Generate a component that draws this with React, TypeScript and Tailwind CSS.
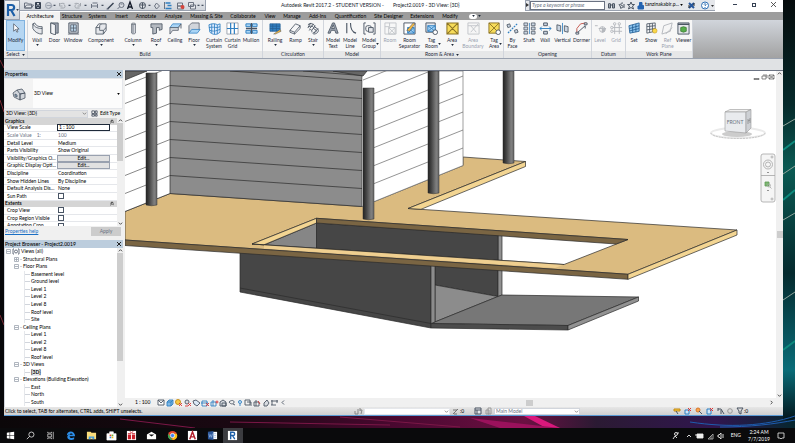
import React, { useState } from 'react';

const INK = '#4b5563';
const BLUE = '#2f7fc1';
const SKY = '#a9d4f5';

// 14x14 drawings used in the ribbon
const ICONS: Record<string, React.ReactNode> = {
  cursor: <path d="M5 2v8l2-2 1.500 3 1.200-.6L8.300 7.600h2.600z" fill="#fff" stroke={INK} strokeWidth=".8" />,
  wall: <path d="M2 2l2-1c2 4 5 4 8 4v8C8 13 4 11 2 7zM2 2c2 4 6 5 10 5" fill="#e5e7eb" stroke={INK} strokeWidth=".9" />,
  door: <g stroke={INK} strokeWidth=".9"><path d="M3 1h8v11H3z" fill="#9ca3af" /><path d="M3 1l5 2v11l-5-2z" fill="#f3f4f6" /></g>,
  window: <g stroke={INK}><path d="M2 1h10v11H2z" fill="#d1d5db" /><path d="M4 3h6v7H4zM7 3v7M4 6.500h6M1 13h12" fill="#bcd6ea" strokeWidth=".8" /></g>,
  component: <path d="M1 6l3-4h8v7l-3 4H1zM1 6h4V4l2-2M5 6v3h4v4M9 9l3-3" fill="#e5e7eb" stroke={INK} strokeWidth=".9" />,
  column: <path d="M5 2c0-1 4-1 4 0v10c0 1-4 1-4 0zM5 2c0 1 4 1 4 0M6.500 3v9" fill="#e5e7eb" stroke={INK} strokeWidth=".8" />,
  roof: <path d="M1 2h12v6l-3 1V6H7v6l-4 1V6H1z" fill="#b4b9c0" stroke={INK} strokeWidth=".9" />,
  ceiling: <g stroke={INK} strokeWidth=".8"><path d="M1 6l3-4h9l-3 4z" fill={SKY} stroke={BLUE} /><path d="M1 6h9v3H4l-3 4zM10 6l3-4v5" fill="#d1d5db" /></g>,
  floor: <g stroke={INK} strokeWidth=".8"><path d="M4 1h8v8H4L1 12V4z" fill="#d1d5db" /><path d="M1 12l3-4h9l-3 4z" fill={SKY} stroke={BLUE} /></g>,
  curtainSystem: <path d="M1 3c4-2 8-1 9 0l3-1v9l-3 2c-3 1-6 0-8-2zM1 6c4-1 6 0 9 0l3-1M2 9c3 1 5 1 8 0l3-1M4 2v10M7 2v11M10 3v10" fill="#dbeafe" stroke={BLUE} strokeWidth=".9" />,
  curtainGrid: <g><path d="M1 1h12v12H1z" fill="#fff" stroke="#9ca3af" /><path d="M5 1v12M9 1v12M1 7h12" stroke={BLUE} strokeWidth="1.300" /></g>,
  mullion: <g><path d="M1 2h5v3H1zM8 2h5v3H8zM1 9h5v3H1zM8 9h5v3H8z" fill={SKY} stroke={BLUE} /><path d="M7 1v12M1 7h12" stroke={INK} strokeWidth="1.500" /></g>,
  railing: <g><path d="M1 2h11v8H1zM1 4.500h11M1 7h11M4 2v8M8 2v8" fill={BLUE} stroke="#245f95" strokeWidth=".8" /><path d="M5 13l7-5 1 2-6 3z" fill="#f4b942" stroke={INK} strokeWidth=".5" /></g>,
  ramp: <path d="M1 9l6-7 5 2v3l-6 6-5-2zM1 9l5 2 6-7M6 11v2" fill="#f3f4f6" stroke={INK} strokeWidth=".9" />,
  stair: <path d="M1 3c3-3 8 0 7 2l4 3c1 3-2 5-5 5M1 6c3-3 7-1 6 1l3 2c0 2-2 3-4 3M2 9c2-2 4 0 3 2M4 1l-3 5M7 2L3 7M9 4L5 9M12 7l-5 5" fill="none" stroke={INK} />,
  modelText: <path d="M1 12L6 1h2l4 11H9.500l-1-3h-4l-1 3zM5 7h3L6.700 3z" fill="#9ca3af" stroke={INK} strokeWidth=".9" />,
  modelLine: <path d="M3 1v11M7 1c0 6 2 10 6 11" fill="none" stroke={INK} strokeWidth="1.200" />,
  modelGroup: <g fill="none" stroke={INK}><path d="M3 1H1v12h2M11 1h2v12h-2" /><rect x="3" y="4" width="6" height="6" rx="2" /><path d="M6 6h5v5H6z" fill="#e5e7eb" /></g>,
  room: <g stroke="#c3c6ca" fill="none"><path d="M1 1h12v12H1zM1 5h5V1M5 6l7 7M12 6l-7 7" /><path d="M5 6h7v7H5z" /></g>,
  roomSeparator: <g><path d="M1 1h12v12H1z" fill="#fff" stroke={INK} /><path d="M5 6h7v6H5z" fill={SKY} stroke={BLUE} /><path d="M5 6l7 6M12 6l-7 6" stroke={BLUE} /><path d="M4 9l7-8 2 1-6 8z" fill="#f4b942" stroke={INK} strokeWidth=".6" /></g>,
  tagRoom: <g><path d="M1 1h10v10H1z" fill="#e5e7eb" stroke={INK} /><path d="M3 4h8v6H3zM3 4l8 6M11 4l-8 6" fill={SKY} stroke={BLUE} /><circle cx="11" cy="11" r="2.500" fill="#fff" stroke={INK} /></g>,
  area: <path d="M1 1h12v12H1zM1 1l12 12M13 1L1 13" fill="#f7dc5a" stroke="#8c7425" strokeWidth="1.100" />,
  areaBoundary: <path d="M1 1h12v12H1zM4 4l6 7M12 2l-8 9M1 4h12" fill="#f6f6f6" stroke="#c3c6ca" />,
  tagArea: <g><path d="M1 1h11v11H1zM1 1l11 11M12 1L1 12" fill="#f7dc5a" stroke="#8c7425" /><circle cx="11" cy="11" r="2.500" fill="#fff" stroke={INK} /></g>,
  byFace: <g fill="none" stroke={BLUE} strokeWidth="1.300"><path d="M12 2L2 12" strokeDasharray="2 1" /><path d="M1 3l3-1 1 3-3 1zM9 9l3-1 1 3-3 1z" fill="#cbd5e1" stroke={INK} strokeWidth=".9" /></g>,
  shaft: <g stroke={INK} fill="#cbd5e1" strokeWidth=".8"><path d="M1 1h4v3H1zM9 1h4v3H9zM1 5.500h4v3H1zM9 5.500h4v3H9zM1 10h4v3H1zM9 10h4v3H9z" /><path d="M7 1v12" stroke={BLUE} /></g>,
  wallOpening: <g stroke={INK} fill="#cbd5e1"><path d="M5 1h4v3H5zM5 10h4v3H5z" /><path d="M1 7h12M3 5L1 7l2 2M11 5l2 2-2 2" stroke={BLUE} fill="none" /></g>,
  vertical: <g stroke={INK} fill="#cbd5e1" strokeWidth=".9"><path d="M1 3l4 1v6L1 9zM9 4l4 1v6l-4-1z" /><path d="M7 1v12" stroke={BLUE} /></g>,
  dormer: <g fill="none" stroke={INK}><path d="M2 12V7l4-5 6-1" stroke="#c4534a" /><path d="M2 12l9-8v3" /><path d="M1 11h3v2H1zM10 1h3v2h-3z" fill="#fff" /></g>,
  level: <g stroke="#b4b8bd" fill="none"><path d="M1 4h3M5 7h8" /><circle cx="9" cy="8" r="3" /><path d="M9 5v6M9 8h3a3 3 0 0 1-3 3z" fill="#b4b8bd" /></g>,
  grid: <g stroke="#b4b8bd" fill="none"><path d="M5 3v10M10 3v10M3 6h10M3 10h10" /><circle cx="5" cy="2" r="1.300" /><circle cx="10" cy="2" r="1.300" /><circle cx="2" cy="6" r="1.300" /><circle cx="2" cy="10" r="1.300" /></g>,
  set: <path d="M1 4l11-3v9L2 12zM1.500 7L12 4M2 9.500L12 7M5 3v8.500M8.500 2v9" fill="#8cc4ef" stroke="#245f95" strokeWidth=".9" />,
  show: <g><path d="M2 2l9-1v9l-9 2zM2 5l9-1M2 8.500L11 7M5 2v9M8 1.500v9" fill="#f3f4f6" stroke={INK} strokeWidth=".9" /><circle cx="10.500" cy="9.500" r="2.500" fill="#fbd84b" stroke="#b58a10" strokeWidth=".5" /></g>,
  refPlane: <path d="M3 4l9-3-2 9-9 3zM5 13L12 6" fill="#f6f6f6" stroke="#b4b8bd" />,
  viewer: <g><path d="M1 1h12v12H1z" fill="#e5e7eb" stroke={INK} /><path d="M1 2.500h12" stroke={INK} strokeWidth="1.500" /><path d="M4 6l3-1 3 1v4l-3 1-3-1z" fill="#57ad4b" stroke="#2c6b24" strokeWidth=".7" /></g>,
};

type Tool = { label: string; icon: string; w: string; arrow?: 'below' | 'side'; off?: boolean };

const PANELS: { name: string; w: string; arrow?: boolean; tools: Tool[] }[] = [
  {
    name: 'Build', w: 'w-[235px]',
    tools: [
      { label: 'Wall', icon: 'wall', w: 'w-[18px]', arrow: 'below' },
      { label: 'Door', icon: 'door', w: 'w-[17px]' },
      { label: 'Window', icon: 'window', w: 'w-5' },
      { label: 'Component', icon: 'component', w: 'w-9', arrow: 'below' },
      { label: 'Column', icon: 'column', w: 'w-7', arrow: 'below' },
      { label: 'Roof', icon: 'roof', w: 'w-[18px]', arrow: 'below' },
      { label: 'Ceiling', icon: 'ceiling', w: 'w-5' },
      { label: 'Floor', icon: 'floor', w: 'w-[18px]', arrow: 'below' },
      { label: 'Curtain System', icon: 'curtainSystem', w: 'w-[22px]' },
      { label: 'Curtain Grid', icon: 'curtainGrid', w: 'w-[15px]' },
      { label: 'Mullion', icon: 'mullion', w: 'w-[22px]' },
    ],
  },
  {
    name: 'Circulation', w: 'w-[61px]',
    tools: [
      { label: 'Railing', icon: 'railing', w: 'w-6', arrow: 'below' },
      { label: 'Ramp', icon: 'ramp', w: 'w-[17px]' },
      { label: 'Stair', icon: 'stair', w: 'w-[18px]', arrow: 'below' },
    ],
  },
  {
    name: 'Model', w: 'w-[57px]',
    tools: [
      { label: 'Model Text', icon: 'modelText', w: 'w-[18px]' },
      { label: 'Model Line', icon: 'modelLine', w: 'w-4' },
      { label: 'Model Group', icon: 'modelGroup', w: 'w-[22px]', arrow: 'side' },
    ],
  },
  {
    name: 'Room & Area', w: 'w-[123px]', arrow: true,
    tools: [
      { label: 'Room', icon: 'room', w: 'w-[18px]', off: true },
      { label: 'Room Separator', icon: 'roomSeparator', w: 'w-[21px]' },
      { label: 'Tag Room', icon: 'tagRoom', w: 'w-[23px]', arrow: 'side' },
      { label: 'Area', icon: 'area', w: 'w-[18px]', arrow: 'below' },
      { label: 'Area Boundary', icon: 'areaBoundary', w: 'w-6', off: true },
      { label: 'Tag Area', icon: 'tagArea', w: 'w-[18px]', arrow: 'side' },
    ],
  },
  {
    name: 'Opening', w: 'w-[88px]',
    tools: [
      { label: 'By Face', icon: 'byFace', w: 'w-[17px]' },
      { label: 'Shaft', icon: 'shaft', w: 'w-4' },
      { label: 'Wall', icon: 'wallOpening', w: 'w-4' },
      { label: 'Vertical', icon: 'vertical', w: 'w-[19px]' },
      { label: 'Dormer', icon: 'dormer', w: 'w-[19px]' },
    ],
  },
  {
    name: 'Datum', w: 'w-[34px]',
    tools: [
      { label: 'Level', icon: 'level', w: 'w-4', off: true },
      { label: 'Grid', icon: 'grid', w: 'w-4', off: true },
    ],
  },
  {
    name: 'Work Plane', w: 'w-[67px]',
    tools: [
      { label: 'Set', icon: 'set', w: 'w-4' },
      { label: 'Show', icon: 'show', w: 'w-[18px]' },
      { label: 'Ref Plane', icon: 'refPlane', w: 'w-[15px]', off: true },
      { label: 'Viewer', icon: 'viewer', w: 'w-[17px]' },
    ],
  },
];

const TABS = [
  { label: 'Architecture', w: 'w-10' },
  { label: 'Structure', w: 'w-6' },
  { label: 'Systems', w: 'w-[27px]' },
  { label: 'Insert', w: 'w-[21px]' },
  { label: 'Annotate', w: 'w-7' },
  { label: 'Analyze', w: 'w-[27px]' },
  { label: 'Massing & Site', w: 'w-[39px]' },
  { label: 'Collaborate', w: 'w-[34px]' },
  { label: 'View', w: 'w-5' },
  { label: 'Manage', w: 'w-6' },
  { label: 'Add-Ins', w: 'w-[27px]' },
  { label: 'Quantification', w: 'w-[39px]' },
  { label: 'Site Designer', w: 'w-[37px]' },
  { label: 'Extensions', w: 'w-[30px]' },
  { label: 'Modify', w: 'w-[26px]' },
];

const PROPS: { label: string; value?: string; kind: 'group' | 'input' | 'text' | 'button' | 'check' | 'muted' }[] = [
  { label: 'Graphics', kind: 'group' },
  { label: 'View Scale', value: '1 : 100', kind: 'input' },
  { label: 'Scale Value    1:', value: '100', kind: 'muted' },
  { label: 'Detail Level', value: 'Medium', kind: 'text' },
  { label: 'Parts Visibility', value: 'Show Original', kind: 'text' },
  { label: 'Visibility/Graphics O...', value: 'Edit...', kind: 'button' },
  { label: 'Graphic Display Opti...', value: 'Edit...', kind: 'button' },
  { label: 'Discipline', value: 'Coordination', kind: 'text' },
  { label: 'Show Hidden Lines', value: 'By Discipline', kind: 'text' },
  { label: 'Default Analysis Dis...', value: 'None', kind: 'text' },
  { label: 'Sun Path', kind: 'check' },
  { label: 'Extents', kind: 'group' },
  { label: 'Crop View', kind: 'check' },
  { label: 'Crop Region Visible', kind: 'check' },
  { label: 'Annotation Crop', kind: 'check' },
];

const TREE: { label: string; depth: number; box?: string }[] = [
  { label: 'Views (all)', depth: 0, box: '-' },
  { label: 'Structural Plans', depth: 1, box: '+' },
  { label: 'Floor Plans', depth: 1, box: '-' },
  { label: 'Basement level', depth: 2 },
  { label: 'Ground level', depth: 2 },
  { label: 'Level 1', depth: 2 },
  { label: 'Level 2', depth: 2 },
  { label: 'Level 8', depth: 2 },
  { label: 'Roof level', depth: 2 },
  { label: 'Site', depth: 2 },
  { label: 'Ceiling Plans', depth: 1, box: '-' },
  { label: 'Level 1', depth: 2 },
  { label: 'Level 2', depth: 2 },
  { label: 'Level 8', depth: 2 },
  { label: 'Roof level', depth: 2 },
  { label: '3D Views', depth: 1, box: '-' },
  { label: '{3D}', depth: 2 },
  { label: 'Elevations (Building Elevation)', depth: 1, box: '-' },
  { label: 'East', depth: 2 },
  { label: 'North', depth: 2 },
  { label: 'South', depth: 2 },
];

const RibbonIcon: React.FC<{ name: string }> = ({ name }) => (
  <svg viewBox="0 0 14 14" className="h-[13px] w-[13px] shrink-0" fill="none">{ICONS[name]}</svg>
);

const Caret: React.FC<{ className?: string }> = ({ className = '' }) => (
  <svg viewBox="0 0 4 3" className={`h-[2px] w-[3px] shrink-0 ${className}`}><path d="M0 0h4L2 3z" fill="currentColor" /></svg>
);

const Chevron: React.FC<{ d: string; className?: string }> = ({ d, className = '' }) => (
  <svg viewBox="0 0 6 6" className={`h-[5px] w-[5px] shrink-0 ${className}`} fill="none" stroke="#333"><path d={d} /></svg>
);

const TitleBar: React.FC = () => (
  <div className="flex h-3 items-start bg-white">
    <div className="flex h-[11px] w-[186px] shrink-0 items-center border-b border-r border-gray-400 bg-gradient-to-b from-gray-200 to-gray-300 text-gray-700">
      <svg viewBox="0 0 184 11" className="h-[11px] w-full" fill="none" stroke="#6b7280">
        <path d="M4 3h3l1 1h3v4H4zM4 8l2-3h7l-2 3z" fill="#e5e7eb" />
        <path d="M15 2.500h5v6h-5zM16 3v2h3V3M16 8.500V6.500h3v2" fill="#9ca3af" stroke="#374151" />
        <circle cx="28" cy="5.500" r="3" fill="#d1d5db" stroke="#9ca3af" /><path d="M26 5.500h5M29 8l3-2" stroke="#9ca3af" />
        <path d="M44 4c0-1-5-1-5 1M39 3v3h3M40 8h3c2 0 2-3 0-4" stroke="#a1a6ad" />
        <path d="M54 4c0-1 5-1 5 1M60 3v3h-3M59 8h-3c-2 0-2-3 0-4" stroke="#a1a6ad" />
        <path d="M71 4v4M77 4v4M71 6h6M72 3h5" /><path d="M87 9l6-6" stroke="#374151" strokeWidth="1.500" /><path d="M86 9h2" />
        <circle cx="101" cy="5" r="2.500" /><path d="M97 9l2-2M100 4h2" />
        <path d="M107 9l2.500-7 2.500 7M108 7h3" stroke="#111827" strokeWidth="1.300" />
        <circle cx="122" cy="5.500" r="3" fill="#e5e7eb" stroke="#4b5563" /><path d="M119 5h6M122 3v6" stroke="#4b5563" />
        <path d="M136 3l3 3-3 3-2-3z" /><path d="M145 3h5M147 5.500h4M145 8.500h6" stroke="#2f7fc1" strokeWidth="1.500" /><path d="M144 2v7" />
        <path d="M157 3h5v3h-5zM157 6h6v3h-6z" fill="#e5e7eb" /><circle cx="162" cy="7" r="2" fill="#d6453c" stroke="none" />
        <path d="M168 2.500h5v4h-5zM170 5h5v4h-5z" fill="#e5e7eb" />
        <path d="M33 5h2l-1 1zM48 5h2l-1 1zM64 5h2l-1 1zM81 5h2l-1 1zM128 5h2l-1 1zM177 5h2l-1 1zM181 5h2l-1 1z" fill="#374151" stroke="#374151" strokeWidth=".5" />
      </svg>
    </div>
    <div className="flex h-[11px] flex-1 items-center gap-[9px] pl-[75px] text-[5px] text-gray-900">
      <span className="whitespace-pre">Autodesk Revit 2017.2 - STUDENT VERSION -</span>
      <span className="whitespace-pre">Project2.0019 - 3D View: {'{3D}'}</span>
    </div>
    <div className="flex h-[11px] w-[190px] shrink-0 items-center border-b border-gray-400 bg-gray-200">
      <button aria-label="Collapse search" className="flex h-[11px] w-[5px] shrink-0 items-center justify-center border border-gray-400 bg-gray-200">
        <svg viewBox="0 0 3 4" className="h-[4px] w-[3px]"><path d="M0 0l3 2-3 2z" fill="#333" /></svg>
      </button>
      <input aria-label="Search" placeholder="Type a keyword or phrase" className="h-[9px] w-[75px] shrink-0 border border-gray-500 bg-white px-px text-[5px] italic placeholder:text-gray-500" />
      <svg viewBox="0 0 38 9" className="ml-px h-[9px] w-[38px] shrink-0" fill="none" stroke="#4b5563">
        <path d="M2.500 7V3l1-1 1 1v4zM6.500 7V3l1-1 1 1v4zM4 4h3" fill="#9ca3af" />
        <path d="M17 2c-3 0-3 2-1 2.500s1 3-2 2.500M13 3l2 4M18 3v4" />
        <path d="M25 1l1 2.500h2.500l-2 1.500 1 3-2.500-1.500L22.500 8l1-3-2-1.500H24z" />
        <path d="M33.500 1.500h2.500v3h1.500V8h-5.500V5h1.500z" fill="#2563b0" stroke="#2563b0" />
      </svg>
      <button className="ml-px flex shrink-0 items-center gap-px whitespace-nowrap text-[5px] text-black">tanzinakabir.p... <Caret /></button>
      <svg viewBox="0 0 32 9" className="ml-1 h-[9px] w-8 shrink-0" fill="none">
        <path d="M2 2l5 5M7 2L2 7" stroke="#26569b" strokeWidth="2" /><path d="M2 4v3M7 2v3" stroke="#333" />
        <circle cx="18" cy="4.500" r="3.500" fill="#fff" stroke="#2f6fb5" /><path d="M17 3.500c0-1 2-1 2 0L18 5M18 6v1" stroke="#2f6fb5" />
        <path d="M24 4h3l-1.500 2z" fill="#333" />
      </svg>
    </div>
    <div className="flex h-[9px] w-[68px] shrink-0 items-center justify-end gap-[15px] pr-[7px] text-gray-700">
      <button aria-label="Minimise" className="h-px w-1 bg-gray-700"></button>
      <button aria-label="Restore" className="h-[4px] w-[4px] border border-gray-700"></button>
      <button aria-label="Close">
        <svg viewBox="0 0 5 5" className="h-[5px] w-[5px]" stroke="#333" strokeWidth=".8"><path d="M0 0l5 5M5 0L0 5" /></svg>
      </button>
    </div>
  </div>
);

const Ribbon: React.FC = () => {
  const [tab, setTab] = useState('Architecture');

  return (
    <header>
      <div className="flex bg-[#b8b9bb]">
        <button aria-label="Application menu" className="flex h-5 w-4 items-center justify-center border border-gray-400 bg-gradient-to-b from-gray-100 to-gray-300">
          <svg viewBox="0 0 10 14" className="h-[14px] w-[10px]" fill="none">
            <path d="M2 13V2h3.500c3.500 0 3.500 5 0 5H2M5 7l3.500 6" stroke="#1d5fa8" strokeWidth="2.200" />
          </svg>
          <Caret className="text-gray-700" />
        </button>
        <div className="min-w-0 flex-1">
          <TitleBar />
          <nav className="flex h-2 bg-[#9d9d9d]">
            {TABS.map(t => (
              <button
                key={t.label}
                onClick={() => setTab(t.label)}
                className={`flex shrink-0 items-center justify-center whitespace-nowrap text-[5px] leading-[8px] text-black ${t.w} ${tab === t.label ? 'bg-[#f2f2f2]' : ''}`}
              >
                {t.label}
              </button>
            ))}
            <button aria-label="Ribbon display" className="flex items-center gap-px pl-[6px] text-gray-800">
              <span className="flex h-[5px] w-2 items-center justify-center rounded-sm bg-white"><Caret /></span>
              <Caret />
            </button>
          </nav>
        </div>
      </div>
      <div className="flex h-[39px] border-b border-gray-400 bg-gradient-to-b from-gray-300 to-[#a2a2a2]">
        <div className="flex w-[24px] shrink-0 flex-col border-r border-gray-300 bg-[#f5f5f5]">
          <button className="ml-[2px] flex h-[31px] w-[19px] flex-col items-center border border-[#7fb2df] bg-[#b5d6f2] pt-px text-[5px]">
            <RibbonIcon name="cursor" />
            <span className="pt-[2px] leading-[6px] text-gray-800">Modify</span>
          </button>
          <button className="flex h-[7px] items-center justify-center gap-[2px] bg-[#e6e7e8] text-[5px] leading-[7px] text-gray-800">Select <Caret /></button>
        </div>
        {PANELS.map(p => (
          <section key={p.name} className={`flex shrink-0 flex-col border-r border-gray-300 bg-[#f7f7f7] ${p.w}`}>
            <div className="flex h-[31px]">
              {p.tools.map(t => (
                <button key={t.label} disabled={t.off} className={`flex shrink-0 flex-col items-center pt-[2px] text-[5px] ${t.w} ${t.off ? 'text-gray-400' : 'text-gray-800'}`}>
                  <RibbonIcon name={t.icon} />
                  <span className="relative flex flex-col items-center pt-[2px] leading-[6px]">
                    {t.label.split(' ').map(word => <span key={word}>{word}</span>)}
                    {t.arrow === 'side' && <Caret className="absolute -right-[3px] top-[8px]" />}
                  </span>
                  {t.arrow === 'below' && <Caret className="mt-px" />}
                </button>
              ))}
            </div>
            <h2 className="flex h-[7px] items-center justify-center gap-[2px] bg-[#e6e7e8] text-[5px] leading-[7px] text-gray-800">
              {p.name}
              {p.arrow && <Caret />}
            </h2>
          </section>
        ))}
      </div>
      <div className="h-[11px] bg-[#e0e2e4]"></div>
    </header>
  );
};

const PanelTitle: React.FC<{ title: string }> = ({ title }) => (
  <div className="flex h-[8px] shrink-0 items-center justify-between bg-[#bccddd] px-px text-[5px] font-medium leading-[8px] text-black">
    <h2>{title}</h2>
    <button aria-label={`Close ${title}`} className="pr-px">
      <svg viewBox="0 0 4 4" className="h-[4px] w-[4px]" stroke="#222"><path d="M0 0l4 4M4 0L0 4" /></svg>
    </button>
  </div>
);

const ScrollBar: React.FC<{ thumb: string }> = ({ thumb }) => (
  <div className="flex w-[6px] shrink-0 flex-col items-center bg-[#f0f0f0]">
    <Chevron d="M1 4l2-2 2 2" />
    <div className={`w-full bg-[#cdcdcd] ${thumb}`}></div>
    <div className="flex-1"></div>
    <Chevron d="M1 2l2 2 2-2" />
  </div>
);

const DropDown: React.FC<{ label: string; box: string; select: string; option?: string }> = ({ label, box, select, option }) => (
  <div className={`relative shrink-0 ${box}`}>
    <select aria-label={label} className={`block h-full w-full appearance-none border px-px leading-[5px] ${select}`}>
      {option && <option>{option}</option>}
    </select>
    <Chevron d="M1 2l2 2 2-2" className="pointer-events-none absolute right-px top-px opacity-60" />
  </div>
);

const Properties: React.FC = () => (
  <section className="flex shrink-0 flex-col bg-[#f0f0f0] text-[5px] text-black">
    <PanelTitle title="Properties" />
    <button className="flex h-[31px] items-center border border-gray-200 bg-[#fcfcfc] text-left">
      <span className="flex h-full w-[28px] items-center justify-center bg-[#f3f3f3]">
        <svg viewBox="0 0 14 14" className="h-[14px] w-[14px]" stroke={INK} strokeWidth=".8">
          <path d="M1 6l4-3 3 4v6l-6-3zM5 3l5-1 3 4-5 1M8 7l5-1v5l-5 2z" fill="#d1d5db" /><path d="M3 7l2 1v2L3 9z" fill="#93b6d3" />
        </svg>
      </span>
      <span className="flex-1 pl-px">3D View</span>
      <Caret className="mr-[2px]" />
    </button>
    <div className="flex h-[9px] items-center">
      <DropDown label="View" box="h-[8px] w-[84px]" select="border-gray-300 bg-[#e3e3e3]" option="3D View: {3D}" />
      <button className="flex flex-1 items-center justify-center gap-[2px]">
        <svg viewBox="0 0 8 8" className="h-[7px] w-[7px]" fill="none" stroke={INK}><path d="M1 1h3v3H1zM5 1h2v3H5zM1 5h3v2H1zM5 5h2v2H5z" /></svg>
        Edit Type
      </button>
    </div>
    <div className="flex h-[108px]">
      <div className="h-full flex-1 overflow-hidden bg-white">
        <div className="flex h-[112px] flex-col">
          {PROPS.map(p => p.kind === 'group' ? (
            <div key={p.label} className="flex min-h-0 flex-1 items-center justify-between bg-[#d5d5d5] px-px pr-[3px] font-semibold leading-[7px]">
              {p.label}
              <svg viewBox="0 0 4 6" className="h-[5px] w-[4px]" fill="none" stroke="#222"><path d="M0 3l2-2 2 2M0 5l2-2 2 2" /></svg>
            </div>
          ) : (
            <label key={p.label} className="flex min-h-0 flex-1 items-center border-b border-gray-200 leading-[7px]">
              <span className={`w-[53px] shrink-0 whitespace-pre pl-[3px] ${p.kind === 'muted' ? 'text-gray-500' : ''}`}>{p.label}</span>
              {p.kind === 'input' && <input defaultValue={p.value} className="h-[7px] w-[53px] border border-gray-800 bg-white pl-px" />}
              {p.kind === 'button' && <button className="h-[7px] w-[53px] border border-gray-400 bg-[#e1e1e1] leading-[5px]">{p.value}</button>}
              {p.kind === 'check' && <input type="checkbox" className="ml-px h-[6px] w-[6px] appearance-none border border-gray-600 bg-white" />}
              {(p.kind === 'text' || p.kind === 'muted') && <span className={`pl-px ${p.kind === 'muted' ? 'text-gray-500' : ''}`}>{p.value}</span>}
            </label>
          ))}
        </div>
      </div>
      <ScrollBar thumb="h-[38px]" />
    </div>
    <div className="flex h-[14px] items-start justify-between pl-px pr-[2px] pt-px">
      <a href="#help" className="leading-[8px] text-[#1a6fc4] underline">Properties help</a>
      <button disabled className="h-[9px] w-[30px] bg-[#cccccc] text-gray-500">Apply</button>
    </div>
  </section>
);

const ProjectBrowser: React.FC = () => (
  <section className="flex min-h-0 flex-1 flex-col bg-white text-[5px] text-black">
    <PanelTitle title="Project Browser - Project2.0019" />
    <div className="flex min-h-0 flex-1">
      <ul className="flex flex-1 flex-col border-l border-gray-300 pb-px">
        {TREE.map((n, i) => (
          <li key={i} className={`flex min-h-0 flex-1 items-center gap-px leading-[7px] ${n.depth === 0 ? 'pl-px' : n.depth === 1 ? 'pl-[9px]' : 'pl-[19px]'}`}>
            {n.box && (
              <svg viewBox="0 0 5 5" className="h-[5px] w-[5px] shrink-0" fill="none" stroke="#9ca3af" strokeWidth=".8">
                <path d={n.box === '+' ? 'M.5.5h4v4h-4zM1 2.500h3M2.500 1v3' : 'M.5.5h4v4h-4zM1 2.500h3'} />
              </svg>
            )}
            {n.depth === 0 && (
              <svg viewBox="0 0 8 7" className="h-[7px] w-2 shrink-0" fill="none" stroke="#6b7280"><path d="M2 1H1v5h1M6 1h1v5H6" /><circle cx="4" cy="3.500" r="1.500" /></svg>
            )}
            {n.depth === 2 && <span className="flex h-full w-[6px] shrink-0 items-center border-l border-gray-200"><span className="w-full border-t border-gray-300"></span></span>}
            {n.depth === 1 && <span className="w-[2px] shrink-0 border-t border-gray-300"></span>}
            <span className={n.label === '{3D}' ? 'bg-gray-200 font-bold' : ''}>{n.label}</span>
          </li>
        ))}
      </ul>
      <ScrollBar thumb="h-[108px]" />
    </div>
  </section>
);

const COLUMNS = [
  { x: 146, y: 72, h: 132 },
  { x: 363, y: 87, h: 131 },
  { x: 428, y: 70, h: 122 },
  { x: 503, y: 70, h: 92 },
];

const Scene: React.FC = () => (
  <svg viewBox="125 70 651 328" preserveAspectRatio="xMinYMin slice" className="h-full w-full" stroke="#2b2b2b" strokeWidth=".7" strokeLinejoin="round">
    <defs>
      <linearGradient id="pipe">
        <stop offset="0" stopColor="#222" /><stop offset=".3" stopColor="#444" /><stop offset=".75" stopColor="#808080" /><stop offset="1" stopColor="#686868" />
      </linearGradient>
    </defs>

    {/* pit and ground slab */}
    <path d="M240 250L431 262v65L240 291z" fill="#464646" />
    <path d="M240 287L431 322.500" />
    <path d="M435 262h63v33.500L435 284z" fill="#464646" />
    <path d="M435 284l63 11.500L435 321z" fill="#8c8c8c" />
    <path d="M498 230h4v64l-4 1.500z" fill="#909090" />
    <path d="M498 295.500l4-1.500 136.500 2L568 324.500 431 322.500z" fill="#777" />
    <path d="M431 322.500l137 2v4.500l-137-2z" fill="#4c4c4c" />
    <path d="M568 324.500l70.500-28.500v4L568 329z" fill="#929292" />
    <path d="M431 262h4v59l-4 1.500z" fill="#8c8c8c" />

    {/* floor slab with its opening */}
    <path d="M264 244l52.500-22v27z" fill="#868686" />
    <path d="M316.500 222L498 234v26l-181.500-12z" fill="#464646" />
    <path fillRule="evenodd" d="M125 210.500L170 192.500 362 205.500 463 164.500V156l62.500 4.500L408 207.500 737 229 628 273.300 125 239zM252 243l312 20.500 64-25L316.500 217.300z" fill="#dbbb80" />
    <path d="M408 207.500L525.500 160.500v5L421 208.300z" fill="#f3d592" />
    <path d="M252 243l64.500-25.700v4.700L264 243.800z" fill="#f3d592" />
    <path d="M316.500 217.300L628 238.500l-12 4.500L316.500 222z" fill="#7a6543" />
    <path d="M264 244l300 19.500-9 3.500L264 247.500z" fill="#efcf90" stroke="none" />
    <path d="M125 239l503 34.300v5L125 244.500z" fill="#7a6543" />
    <path d="M628 273.300L737 229v5l-109 44.300z" fill="#f3d592" />
    <path d="M252 243l312 20.500" />

    {/* siding */}
    <path d="M125 70h45v122.500l-45 18z" fill="#fff" stroke="none" />
    <path d="M170 70h192v135.500L170 192.500z" fill="#8c8c8c" />
    <path d="M362 70h101v94.500L362 205.500z" fill="#fff" stroke="#777" />
    <path d="M230 70l132 9.500M303 70l59 4.500" fill="none" />
    {[0, 1, 2, 3, 4, 5].map(i => <path key={i} d={`M170 ${84.500 + i * 18}l192 13`} />)}
    {[0, 1, 2, 3, 4, 5, 6].map(i => <path key={i} d={`M125 ${84.500 + i * 18}l45-18`} stroke="#555" />)}
    {[0, 1, 2, 3, 4, 5, 6].map(i => <path key={i} d={`M363 ${79 + i * 18}l100-40`} stroke="#666" />)}
    <path d="M125 210.500l45-18" />
    <path d="M125 70h22l-22 9zM333 70h34l-4 5z" fill="#666" />

    {COLUMNS.map(c => (
      <path key={c.x} d={`M${c.x} ${c.y}h11v${c.h}q-5.500 1.500-11 0z`} fill="url(#pipe)" stroke="#333" strokeWidth=".5" />
    ))}

    {/* view cube */}
    <ellipse cx="738" cy="132" rx="27" ry="5" fill="none" stroke="#eaeaea" strokeWidth="2" />
    <path d="M711 132a27 5.500 0 0 0 54 0" fill="none" stroke="#aaa" strokeDasharray="2 1" strokeWidth=".6" />
    <ellipse cx="737" cy="133" rx="15" ry="3" fill="#ccc" stroke="none" />
    <g stroke="#999" strokeWidth=".6">
      <path d="M725 111l5-2.500h21l-5 2.500z" fill="#f1f1f1" />
      <path d="M725 111h21v21l-21-2z" fill="#e9ebee" />
      <path d="M746 111l5-2.500v18.500l-5 5z" fill="#cdd0d4" />
    </g>
    <text x="735" y="123" textAnchor="middle" fontSize="5" fill="#6b7280" stroke="none">FRONT</text>
    <path d="M748 118v5M750 117v5M748 120l2-1" stroke="#777" strokeWidth=".6" />

    {/* navigation bar */}
    <g fill="none" stroke="#a5a5a5" strokeWidth=".8">
      <rect x="761" y="153" width="14" height="48" rx="2" fill="#f5f5f5" />
      <path d="M761 174.500h14" />
      <circle cx="768" cy="163.500" r="4.500" /><circle cx="768" cy="163.500" r="2.500" />
      <circle cx="772" cy="156" r="1" /><circle cx="772" cy="198" r="1" />
      <path d="M765 181h4v4h-4z" fill="#7db873" stroke="#5d9954" /><circle cx="769" cy="184.500" r="1.500" /><path d="M770 186l1.500 1.500" />
      <path d="M767 171h2l-1 1zM767 189h2l-1 1z" fill="#333" stroke="none" />
    </g>

    <g fill="none" stroke="#555">
      <path d="M754 77.500h5v1h-5zM762 75h4v3h-4zM763 74h4v3M769 74h5v4h-5zM769 74l5 4M774 74l-5 4" />
    </g>
  </svg>
);

const ViewControls: React.FC = () => (
  <div className="flex h-[9px] shrink-0 items-center bg-[#f0f0f0] text-[5px] text-black">
    <span className="w-8 pl-[10px] leading-[9px]">1 : 100</span>
    <svg viewBox="0 0 128 9" className="h-[9px] w-32 shrink-0" fill="none" stroke="#4b5563" strokeWidth=".9">
      <path d="M1 2h6v5H1zM1 2l3 3 3-3" fill="#fff" />
      <path d="M10 4l2-2h4v4l-2 2h-4zM10 4h4v4M14 4l2-2" fill="#7fb9e6" stroke="#2f7fc1" />
      <circle cx="21" cy="4" r="2.500" fill="#f7c948" stroke="#c48a10" /><path d="M22 5l3 3M25 5l-3 3" stroke="#d33" />
      <circle cx="30" cy="4" r="2" fill="#d7dbe0" /><path d="M31 5l3 3M34 5l-3 3M28 8h3" stroke="#d33" />
      <path d="M36 3l3-1 4 3-3 3-3-2z" fill="#dbe9f5" /><path d="M45 3h5v5h-5zM44 5h7" stroke="#2f7fc1" /><path d="M49 5l3 3M52 5l-3 3" stroke="#d33" />
      <path d="M54 4h5v4h-5zM56 2v6" stroke="#2f7fc1" /><circle cx="60" cy="4" r="1" stroke="#d33" />
      <path d="M63 4l3-2 3 2v4h-6zM65 5h4v3h-4z" fill="#d7dbe0" /><path d="M72 4c2-2 5-2 5 0s-3 3-5 0zM76 6l2 1" />
      <circle cx="83" cy="4" r="1.500" fill="#cfe5f7" stroke="#2f7fc1" /><path d="M83 6v2" stroke="#2f7fc1" />
      <path d="M88 2h5v5h-5zM90 4h4v4" /><path d="M97 4h5v4h-5zM99 2v6" /><path d="M101 3l2 3" stroke="#d33" />
      <path d="M107 5l3-3 2 3-2 3h-3z" fill="#d7dbe0" /><path d="M114 3h7M115 2v5M120 2v3M114 7h5" /><path d="M127 2.500L125 4.500l2 2" />
    </svg>
    <div className="flex-1"></div>
    <div className="h-[6px] w-[7px] bg-[#cdcdcd]"></div>
    <div className="flex flex-1 justify-end pr-[9px]"><Chevron d="M2 1l2 2-2 2" /></div>
  </div>
);

const StatusBar: React.FC = () => (
  <footer className="flex h-[9px] shrink-0 items-center border-b border-[#5b9bd5] bg-gradient-to-b from-[#e6e6e6] to-[#d0d0d0] text-[5px] leading-[8px] text-black">
    <span className="w-[348px] shrink-0 pl-px">Click to select, TAB for alternates, CTRL adds, SHIFT unselects.</span>
    <svg viewBox="0 0 12 8" className="h-[8px] w-3 shrink-0" fill="none" stroke="#888"><path d="M3 4v3h3V2M8 3h2l-1 4M8 1v3" /></svg>
    <DropDown label="Active workset" box="h-[7px] w-[86px]" select="border-gray-200 bg-white" />
    <svg viewBox="0 0 10 8" className="h-[8px] w-[10px] shrink-0" fill="none" stroke="#777"><path d="M3 7l5-5M3 3h4M4 7h3" /></svg>
    <span className="w-[12px] shrink-0">:0</span>
    <svg viewBox="0 0 22 8" className="h-[8px] w-[22px] shrink-0" fill="none" stroke="#4b5563"><path d="M3 1h6v6H3zM3 3h6M5 3v4" fill="#e5e7eb" /><path d="M14 3h3v4h-3zM16 1h3v6h-3z" stroke="#999" /></svg>
    <DropDown label="Design option" box="h-[7px] w-[86px]" select="border-gray-300 bg-white text-gray-500" option="Main Model" />
    <div className="flex-1"></div>
    <svg viewBox="0 0 72 8" className="h-[8px] w-[72px] shrink-0" fill="none" stroke="#4b5563">
      <path d="M2 2h6v2H2z" fill="#f4c542" stroke="#c48a10" /><path d="M4 4l2 3" />
      <path d="M13 3h4v4h-4z" fill="#cfe5f7" stroke="#2f7fc1" /><path d="M16 1l3 3M19 1l-3 3" stroke="#d33" />
      <circle cx="26" cy="3" r="2" fill="#f8a34b" stroke="#d9772a" /><path d="M27 4l3 3" />
      <path d="M35 2h4v5h-4z" fill="#cfe5f7" stroke="#2f7fc1" /><path d="M38 1l3 3M41 1l-3 3" stroke="#d33" />
      <path d="M46 2h3l3 5M46 1v3M49 3v4" /><circle cx="58" cy="4" r="2.300" stroke="#999" /><path d="M65 1h6l-2 3v3l-2-1V4z" />
    </svg>
    <span className="w-[39px] shrink-0">:0</span>
  </footer>
);

const TASKS: { name: string; art: React.ReactNode }[] = [
  { name: 'Start', art: <path d="M2 3l3-.5v3.200H2zM5.600 2.400L10 2v3.700H5.600zM2 6.300h3v3.200L2 9zM5.600 6.300H10V10l-4.400-.4z" fill="#fff" /> },
  { name: 'Search', art: <g fill="none" stroke="#fff" strokeWidth=".8"><circle cx="7" cy="5" r="2.800" /><path d="M5 7l-3 3" /></g> },
  { name: 'Task view', art: <g fill="none" stroke="#ddd" strokeWidth=".8"><path d="M3 4.500h4v3H3zM3 2v1.300h4V2M3 10V8.700h4V10M9 2v8" /></g> },
  { name: 'Edge', art: <path d="M2 6c0-6 9-6 9 .7H5c0 2.300 3 2.600 5 1.300v2.200C6 12 2 10 2.500 7 3 5.500 4 5 5 4.800 4 4.800 3 5 2 6zM5 5.300h3.500C8 3.500 5.500 3.500 5 5.300z" fill="#2c8ee8" /> },
  { name: 'Explorer', art: <g><path d="M1 2h4l1 1h5v7H1z" fill="#f9dd7c" /><path d="M3 7h6v3H7V8.500H5V10H3z" fill="#3f9be0" /></g> },
  { name: 'Store', art: <g><path d="M1 4h10v7H1zM4 4V2h4v2" fill="#fff" stroke="#fff" strokeWidth=".7" /><path d="M4 5h1.800v1.800H4z" fill="#e5482f" /><path d="M6.200 5H8v1.800H6.200z" fill="#6fb52d" /><path d="M4 7.300h1.800V9H4z" fill="#2c8ee8" /><path d="M6.200 7.300H8V9H6.200z" fill="#f5b921" /></g> },
  { name: 'Rewards', art: <g><path d="M1 1h10v10H1z" fill="#fff" /><path d="M2 5.500h3.500V10H2zM6.500 5.500H10V10H6.500zM2 3.500h3.500v1.300H2zM6.500 3.500H10v1.300H6.500z" fill="#c9202b" /><path d="M4 1.500l2 1.500 2-1.500" stroke="#c9202b" fill="none" /></g> },
  { name: 'Mail', art: <path d="M1 5l5-3 5 3v5H1zM3 5l3 2 3-2z" fill="#fff" fillRule="evenodd" /> },
  { name: 'Chrome', art: <g><circle cx="6" cy="6" r="5" fill="#e5482f" /><path d="M1.500 4L6 11C2 11 0 7 1.500 4z" fill="#35a853" /><path d="M6 11c5-.5 6-5 4.500-7H6z" fill="#fbc116" /><circle cx="6" cy="6" r="2.300" fill="#4285f4" stroke="#fff" strokeWidth=".8" /></g> },
  { name: 'AutoCAD', art: <g><path d="M1 1h10v10H1z" fill="#fff" /><path d="M3 10L6 2l3 8M4 7.500h4" fill="none" stroke="#b5202c" strokeWidth="1.600" /></g> },
  { name: 'Word', art: <g><path d="M6 2h5v8H6z" fill="#fff" /><path d="M1 2l6-1v10l-6-1z" fill="#2a5699" /><path d="M2 4l1 4 1-3 1 3 1-4M7 4h3M7 6h3M7 8h3" fill="none" stroke="#9dbbe5" strokeWidth=".7" /></g> },
  { name: 'Revit', art: <g><path d="M1 1h10v10H1z" fill="#fff" /><path d="M4 10V2.500h2.500c2.500 0 2.500 3.500 0 3.500H4M6 6l2.500 4" fill="none" stroke="#1d5fa8" strokeWidth="1.500" /></g> },
];

const Taskbar: React.FC = () => (
  <nav className="relative flex h-[15px] shrink-0 items-center justify-between bg-[#0a0a0c] text-[5px] text-white">
    <div className="flex h-full w-[243px]">
      {TASKS.map(t => (
        <button key={t.name} aria-label={t.name} className={`flex flex-1 items-center justify-center ${t.name === 'Revit' ? 'bg-[#3b3c40]' : ''}`}>
          <svg viewBox="0 0 12 12" className="h-[11px] w-[11px]">{t.art}</svg>
        </button>
      ))}
    </div>
    <div className="flex items-center gap-[6px] pr-[10px]">
      <svg viewBox="0 0 54 9" className="h-[9px] w-[54px]" fill="none" stroke="#eee" strokeWidth=".9">
        <circle cx="5" cy="3" r="1.500" /><path d="M2 8l2-3 2 2M6 2h2" /><path d="M16 6l2-2 2 2" />
        <path d="M26 3h6v4h-6z" fill="#eee" /><path d="M25 3v2" /><path d="M37 8l5-5v5zM40 5v3" stroke="#aaa" /><path d="M47 4h1l2-2v6l-2-2h-1zM52 3v4" />
      </svg>
      <span>ENG</span>
      <span className="w-[24px] text-center leading-[7px]">2:24 AM<br />7/7/2019</span>
      <svg viewBox="0 0 8 8" className="h-[8px] w-[8px]" fill="none" stroke="#eee" strokeWidth=".8"><path d="M1 1h6v5H5L4 7 3 6H1z" /></svg>
    </div>
  </nav>
);

const Wallpaper: React.FC = () => (
  <svg viewBox="0 0 795 443" preserveAspectRatio="none" className="absolute inset-0 h-full w-full" fill="none">
    <defs>
      <linearGradient id="glow">
        <stop offset="0" stopColor="#0b0709" /><stop offset=".3" stopColor="#1a0812" /><stop offset=".5" stopColor="#4a0830" /><stop offset=".66" stopColor="#6b1042" />
        <stop offset=".75" stopColor="#2b1a33" /><stop offset=".9" stopColor="#30164f" /><stop offset="1" stopColor="#06272f" />
      </linearGradient>
      <linearGradient id="teal" x1="0" y1="0" x2="0" y2="1">
        <stop offset="0" stopColor="#050b0c" /><stop offset=".25" stopColor="#062a2b" /><stop offset=".4" stopColor="#0b5a53" /><stop offset=".65" stopColor="#052a2e" /><stop offset=".88" stopColor="#0a6c78" /><stop offset="1" stopColor="#04161c" />
      </linearGradient>
    </defs>
    <path d="M0 0h795v443H0z" fill="#07070a" />
    <path d="M0 416h795v12H0z" fill="url(#glow)" />
    <path d="M783 0h12v420h-12z" fill="url(#teal)" />
    <path d="M783 126l12-7M783 174l12-8M783 220l12-7M783 300l12-8" stroke="#8fa39a" />
    <path d="M783 150l12-9M783 200l12-10M783 350l12-9" stroke="#0d8a7d" strokeWidth="2" />
    <path d="M120 419l75 9M230 422l160 3M340 417l120 10" stroke="#7a1746" />
    <path d="M535 416l25 12h-14l-22-12z" fill="#d9187c" />
    <path d="M470 418l90 10h-60z" fill="#9b115c" />
    <path d="M690 422c40 6 75 4 105-6M720 427c30 0 55-3 75-7" stroke="#1e5cae" />
    <path d="M0 100l4 12M0 315l4 10M0 60l4 8" stroke="#7a2a33" />
  </svg>
);

const App: React.FC = () => (
  <div className="relative flex h-screen flex-col overflow-hidden bg-black font-['Lato','Open_Sans',sans-serif]">
    <Wallpaper />
    <main className="relative mb-3 ml-1 mr-3 flex min-h-0 flex-1 flex-col bg-[#f0f0f0]">
      <Ribbon />
      <div className="flex min-h-0 flex-1">
        <aside className="flex w-[119px] shrink-0 flex-col bg-[#d9dcdf]">
          <Properties />
          <ProjectBrowser />
        </aside>
        <div className="ml-[2px] flex min-w-0 flex-1 flex-col border-t border-gray-500">
          <div className="flex min-h-0 flex-1">
            <div className="min-w-0 flex-1 overflow-hidden bg-white"><Scene /></div>
            <div className="flex w-[7px] shrink-0 flex-col items-center bg-[#f0f0f0]">
              <Chevron d="M1 4l2-2 2 2" />
              <div className="flex-1"></div>
              <div className="h-[7px] w-[6px] bg-[#cdcdcd]"></div>
              <div className="flex-1"></div>
              <Chevron d="M1 2l2 2 2-2" />
            </div>
          </div>
          <ViewControls />
        </div>
      </div>
      <StatusBar />
    </main>
    <Taskbar />
  </div>
);

export default App;
